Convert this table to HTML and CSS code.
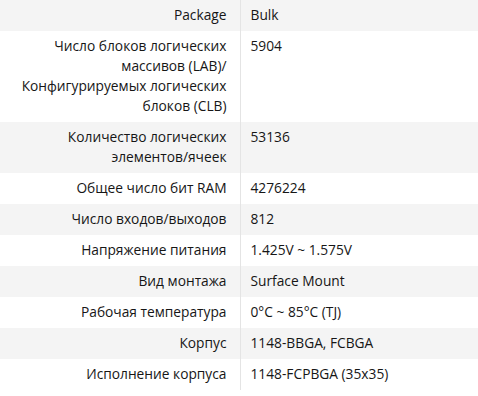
FILE: index.html
```html
<!DOCTYPE html>
<html lang="ru">
<head>
<meta charset="utf-8">
<link rel="stylesheet" href="styles.css">
</head>
<body>
<table class="specs">
<tbody>
<tr><th>Package</th><td>Bulk</td></tr>
<tr><th>Число блоков логических массивов (LAB)/ Конфигурируемых логических блоков (CLB)</th><td>5904</td></tr>
<tr><th>Количество логических элементов/ячеек</th><td>53136</td></tr>
<tr><th>Общее число бит RAM</th><td>4276224</td></tr>
<tr><th>Число входов/выходов</th><td>812</td></tr>
<tr><th>Напряжение питания</th><td>1.425V ~ 1.575V</td></tr>
<tr><th>Вид монтажа</th><td>Surface Mount</td></tr>
<tr><th>Рабочая температура</th><td>0°C ~ 85°C (TJ)</td></tr>
<tr><th>Корпус</th><td>1148-BBGA, FCBGA</td></tr>
<tr><th>Исполнение корпуса</th><td>1148-FCPBGA (35x35)</td></tr>
</tbody>
</table>
</body>
</html>
```
FILE: styles.css
```css
html, body {
  margin: 0;
  padding: 0;
  background: #fff;
}
body {
  font-family: "Open Sans", "Noto Sans", sans-serif;
  font-size: 13.75px;
  font-weight: 500;
  line-height: 20px;
  color: #161616;
}
.specs {
  width: 100%;
  border-collapse: collapse;
  table-layout: fixed;
}
.specs tr:nth-child(odd) {
  background: #f4f4f4;
}
.specs th,
.specs td {
  padding: 5px 0 6px;
  vertical-align: top;
  font-weight: 500;
}
.specs th {
  width: 240px;
  box-sizing: border-box;
  text-align: right;
  padding-right: 13px;
  padding-left: 14px;
  border-right: 1px solid #e4e4e4;
}
.specs td {
  padding-left: 10px;
  text-align: left;
}
```
